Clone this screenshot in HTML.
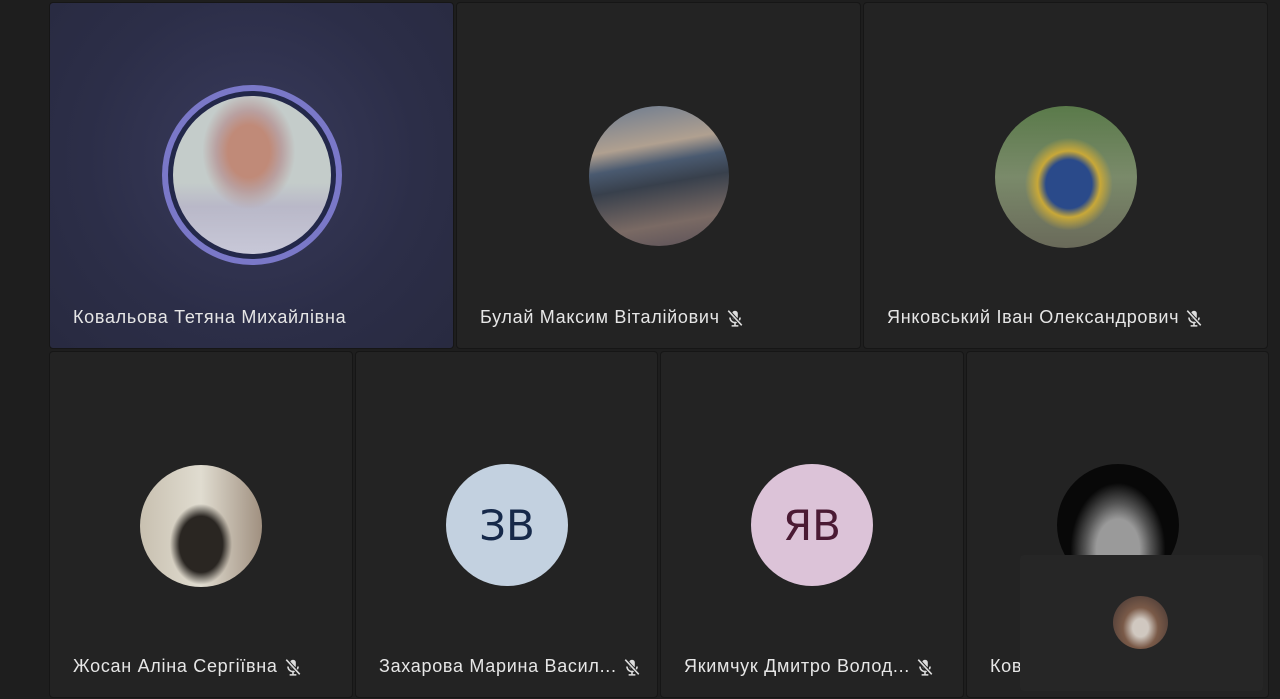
<!DOCTYPE html><html><head><meta charset="utf-8"><style>
body{margin:0;width:1280px;height:699px;background:#1e1e1e;position:relative;overflow:hidden;font-family:"Liberation Sans","DejaVu Sans",sans-serif}
.t{position:absolute;background:#232323;border-radius:4px;border:1px solid #161616;box-sizing:border-box}
.n{position:absolute;left:23px;bottom:20px;color:#e6e6e6;font-size:18px;letter-spacing:0.7px;white-space:nowrap;display:flex;align-items:center;gap:6px}
.a{position:absolute;border-radius:50%}
.i{position:absolute;border-radius:50%;display:flex;align-items:center;justify-content:center;font-size:42px;font-family:"DejaVu Sans",sans-serif}
</style></head><body>
<svg width="0" height="0" style="position:absolute"><defs><symbol id="m" viewBox="0 0 16 16"><rect x="5.5" y="1.5" width="5" height="8" rx="2.5" fill="#ddd"/><path d="M3.5 7.5a4.5 4.5 0 0 0 9 0M8 12v3M5 15h6" stroke="#ddd" stroke-width="1.4" fill="none"/><path d="M2 1.5l12 13" stroke="#232323" stroke-width="3"/><path d="M2 1.5l12 13" stroke="#ddd" stroke-width="1.4"/></symbol></defs></svg>

<div class="t" style="left:49px;top:2px;width:405px;height:347px;background:radial-gradient(circle at 50% 45%,#393b5c 0%,#2c2e48 60%,#282a40 100%)">
<div class="a" style="left:112px;top:82px;width:180px;height:180px;background:#7a78c8"></div>
<div class="a" style="left:118px;top:88px;width:168px;height:168px;background:#23284a"></div>
<div class="a" style="left:123px;top:93px;width:158px;height:158px;background:radial-gradient(ellipse at 48% 35%,#c08a78 0 18%,#b9a0a0 28%,transparent 40%),linear-gradient(#c4ccca 0 55%,#b9b8c8 70%,#c8c8d8)"></div>
<div class="n">Ковальова Тетяна Михайлівна</div></div>

<div class="t" style="left:456px;top:2px;width:405px;height:347px">
<div class="a" style="left:132px;top:103px;width:140px;height:140px;background:linear-gradient(170deg,#6a7a90 0%,#b0a090 30%,#4a5a70 42%,#38404c 55%,#7a6a64 80%,#5a5058)"></div>
<div class="n">Булай Максим Віталійович <svg width="18" height="18"><use href="#m"/></svg></div></div>

<div class="t" style="left:863px;top:2px;width:405px;height:347px">
<div class="a" style="left:131px;top:103px;width:142px;height:142px;background:radial-gradient(ellipse at 52% 55%,#2a4a8a 0 22%,#c8a838 30%,transparent 42%),linear-gradient(#5a7a4a,#7a8a6a 50%,#6a6a5a)"></div>
<div class="n">Янковський Іван Олександрович <svg width="18" height="18"><use href="#m"/></svg></div></div>

<div class="t" style="left:49px;top:351px;width:304px;height:347px">
<div class="a" style="left:90px;top:113px;width:122px;height:122px;background:radial-gradient(ellipse at 50% 65%,#2a2622 0 25%,transparent 36%),linear-gradient(90deg,#c8c0b0,#e0dcd0 50%,#a09080)"></div>
<div class="n">Жосан Аліна Сергіївна <svg width="18" height="18"><use href="#m"/></svg></div></div>

<div class="t" style="left:355px;top:351px;width:303px;height:347px">
<div class="i" style="left:90px;top:112px;width:122px;height:122px;background:#c3d1e0;color:#16294a">ЗВ</div>
<div class="n">Захарова Марина Васил... <svg width="18" height="18"><use href="#m"/></svg></div></div>

<div class="t" style="left:660px;top:351px;width:304px;height:347px">
<div class="i" style="left:90px;top:112px;width:122px;height:122px;background:#dcc3d8;color:#4a1a34">ЯВ</div>
<div class="n">Якимчук Дмитро Волод... <svg width="18" height="18"><use href="#m"/></svg></div></div>

<div class="t" style="left:966px;top:351px;width:303px;height:347px">
<div class="a" style="left:90px;top:112px;width:122px;height:122px;background:radial-gradient(ellipse at 50% 70%,#9a9a9a 0 25%,#555 38%,#080808 55%)"></div>
<div class="n">Ков</div></div>

<div style="position:absolute;left:1020px;top:555px;width:243px;height:136px;background:#262626;border-radius:4px">
<div class="a" style="left:93px;top:41px;width:55px;height:53px;background:radial-gradient(ellipse at 50% 60%,#d0c8c0 0 20%,#7a5a48 45%,#3a3030)"></div></div>
</body></html>
